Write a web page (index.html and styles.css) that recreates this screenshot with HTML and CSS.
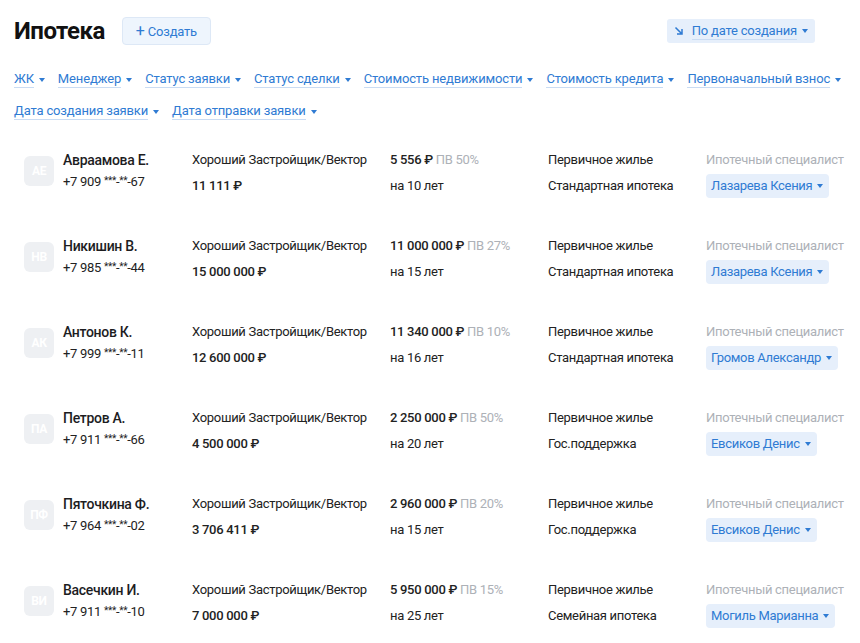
FILE: index.html
```html
<!DOCTYPE html>
<html lang="ru">
<head>
  <meta charset="UTF-8">
  <title>Ипотека</title>
  <link rel="stylesheet" href="styles.css">
</head>
<body>
  <div class="header">
    <h1>Ипотека</h1>
    <button class="create-btn"><span class="plus">+</span> Создать</button>
    <button class="sort-btn">
      <svg width="10" height="10" viewBox="0 0 10 10"><path d="M1.5 1.5 L8 8 M8 3 V8 H3" fill="none" stroke="currentColor" stroke-width="1.5"/></svg>
      <span class="link">По дате создания</span><span class="caret"></span>
    </button>
  </div>

  <div class="filters">
    <span class="filter"><span class="link">ЖК</span><span class="caret"></span></span>
    <span class="filter"><span class="link">Менеджер</span><span class="caret"></span></span>
    <span class="filter"><span class="link">Статус заявки</span><span class="caret"></span></span>
    <span class="filter"><span class="link">Статус сделки</span><span class="caret"></span></span>
    <span class="filter"><span class="link">Стоимость недвижимости</span><span class="caret"></span></span>
    <span class="filter"><span class="link">Стоимость кредита</span><span class="caret"></span></span>
    <span class="filter"><span class="link">Первоначальный взнос</span><span class="caret"></span></span>
    <span class="filter"><span class="link">Дата создания заявки</span><span class="caret"></span></span>
    <span class="filter"><span class="link">Дата отправки заявки</span><span class="caret"></span></span>
  </div>

  <div class="list">
    <!-- 1 -->
    <div class="row">
      <div class="avatar">АЕ</div>
      <div class="person">
        <div class="name">Авраамова Е.</div>
        <div class="phone">+7 909 <span class="stars">***</span>-<span class="stars">**</span>-67</div>
      </div>
      <div class="cell">
        <div>Хороший Застройщик/Вектор</div>
        <div class="second strong">11 111 ₽</div>
      </div>
      <div class="cell">
        <div><span class="strong">5 556 ₽</span> <span class="muted">ПВ 50%</span></div>
        <div class="second">на 10 лет</div>
      </div>
      <div class="cell">
        <div>Первичное жилье</div>
        <div class="second">Стандартная ипотека</div>
      </div>
      <div class="cell">
        <div class="muted">Ипотечный специалист</div>
        <span class="chip">Лазарева Ксения<span class="caret"></span></span>
      </div>
    </div>
    <!-- 2 -->
    <div class="row">
      <div class="avatar">НВ</div>
      <div class="person">
        <div class="name">Никишин В.</div>
        <div class="phone">+7 985 <span class="stars">***</span>-<span class="stars">**</span>-44</div>
      </div>
      <div class="cell">
        <div>Хороший Застройщик/Вектор</div>
        <div class="second strong">15 000 000 ₽</div>
      </div>
      <div class="cell">
        <div><span class="strong">11 000 000 ₽</span> <span class="muted">ПВ 27%</span></div>
        <div class="second">на 15 лет</div>
      </div>
      <div class="cell">
        <div>Первичное жилье</div>
        <div class="second">Стандартная ипотека</div>
      </div>
      <div class="cell">
        <div class="muted">Ипотечный специалист</div>
        <span class="chip">Лазарева Ксения<span class="caret"></span></span>
      </div>
    </div>
    <!-- 3 -->
    <div class="row">
      <div class="avatar">АК</div>
      <div class="person">
        <div class="name">Антонов К.</div>
        <div class="phone">+7 999 <span class="stars">***</span>-<span class="stars">**</span>-11</div>
      </div>
      <div class="cell">
        <div>Хороший Застройщик/Вектор</div>
        <div class="second strong">12 600 000 ₽</div>
      </div>
      <div class="cell">
        <div><span class="strong">11 340 000 ₽</span> <span class="muted">ПВ 10%</span></div>
        <div class="second">на 16 лет</div>
      </div>
      <div class="cell">
        <div>Первичное жилье</div>
        <div class="second">Стандартная ипотека</div>
      </div>
      <div class="cell">
        <div class="muted">Ипотечный специалист</div>
        <span class="chip">Громов Александр<span class="caret"></span></span>
      </div>
    </div>
    <!-- 4 -->
    <div class="row">
      <div class="avatar">ПА</div>
      <div class="person">
        <div class="name">Петров А.</div>
        <div class="phone">+7 911 <span class="stars">***</span>-<span class="stars">**</span>-66</div>
      </div>
      <div class="cell">
        <div>Хороший Застройщик/Вектор</div>
        <div class="second strong">4 500 000 ₽</div>
      </div>
      <div class="cell">
        <div><span class="strong">2 250 000 ₽</span> <span class="muted">ПВ 50%</span></div>
        <div class="second">на 20 лет</div>
      </div>
      <div class="cell">
        <div>Первичное жилье</div>
        <div class="second">Гос.поддержка</div>
      </div>
      <div class="cell">
        <div class="muted">Ипотечный специалист</div>
        <span class="chip">Евсиков Денис<span class="caret"></span></span>
      </div>
    </div>
    <!-- 5 -->
    <div class="row">
      <div class="avatar">ПФ</div>
      <div class="person">
        <div class="name">Пяточкина Ф.</div>
        <div class="phone">+7 964 <span class="stars">***</span>-<span class="stars">**</span>-02</div>
      </div>
      <div class="cell">
        <div>Хороший Застройщик/Вектор</div>
        <div class="second strong">3 706 411 ₽</div>
      </div>
      <div class="cell">
        <div><span class="strong">2 960 000 ₽</span> <span class="muted">ПВ 20%</span></div>
        <div class="second">на 15 лет</div>
      </div>
      <div class="cell">
        <div>Первичное жилье</div>
        <div class="second">Гос.поддержка</div>
      </div>
      <div class="cell">
        <div class="muted">Ипотечный специалист</div>
        <span class="chip">Евсиков Денис<span class="caret"></span></span>
      </div>
    </div>
    <!-- 6 -->
    <div class="row">
      <div class="avatar">ВИ</div>
      <div class="person">
        <div class="name">Васечкин И.</div>
        <div class="phone">+7 911 <span class="stars">***</span>-<span class="stars">**</span>-10</div>
      </div>
      <div class="cell">
        <div>Хороший Застройщик/Вектор</div>
        <div class="second strong">7 000 000 ₽</div>
      </div>
      <div class="cell">
        <div><span class="strong">5 950 000 ₽</span> <span class="muted">ПВ 15%</span></div>
        <div class="second">на 25 лет</div>
      </div>
      <div class="cell">
        <div>Первичное жилье</div>
        <div class="second">Семейная ипотека</div>
      </div>
      <div class="cell">
        <div class="muted">Ипотечный специалист</div>
        <span class="chip">Могиль Марианна<span class="caret"></span></span>
      </div>
    </div>
  </div>
</body>
</html>
```

FILE: styles.css
```css
body {
  margin: 0;
  padding: 17px 0 0 14px;
  font-family: Roboto, "Noto Sans", sans-serif;
  font-size: 13px;
  letter-spacing: -0.3px;
  color: #222;
  background: #fff;
  overflow: hidden;
}
h1 {
  margin: 0 17px 0 0;
  font-size: 24px;
  font-weight: 700;
  letter-spacing: -0.5px;
  color: #111;
}
button {
  font-family: inherit;
  font-size: 13px;
  letter-spacing: -0.2px;
  cursor: pointer;
}

.header {
  display: flex;
  align-items: center;
  height: 28px;
  padding-right: 45px;
}
.create-btn {
  height: 28px;
  padding: 0 13px;
  border: 1px solid #dde8f6;
  border-radius: 4px;
  background: #eef5fd;
  color: #2f7bd3;
}
.create-btn .plus {
  font-size: 16px;
  line-height: 1;
}
.sort-btn {
  margin-left: auto;
  display: flex;
  align-items: center;
  gap: 8px;
  height: 24px;
  padding: 0 7px;
  border: 0;
  border-radius: 3px;
  background: #e6effb;
  color: #2f7bd3;
}

.link {
  border-bottom: 1px solid #cadcf3;
  padding-bottom: 1px;
}
.caret {
  display: inline-block;
  width: 0;
  height: 0;
  margin-left: 5px;
  border-left: 3px solid transparent;
  border-right: 3px solid transparent;
  border-top: 4px solid currentColor;
  vertical-align: middle;
}
.sort-btn .caret {
  margin-left: -3px;
}

.filters {
  display: flex;
  flex-wrap: wrap;
  column-gap: 13px;
  row-gap: 14px;
  margin-top: 25px;
  line-height: 18px;
  letter-spacing: -0.15px;
  color: #2f7bd3;
}

.list {
  margin-top: 32px;
  padding-left: 10px;
}
.row {
  display: grid;
  grid-template-columns: 39px 129px 198px 158px 158px auto;
  margin-bottom: 40px;
  line-height: 16px;
  white-space: nowrap;
}
.avatar {
  width: 30px;
  height: 30px;
  margin-top: 4px;
  border-radius: 6px;
  background: #eef0f3;
  color: #fff;
  font-size: 12px;
  font-weight: 700;
  line-height: 30px;
  text-align: center;
}
.name {
  font-size: 14px;
  font-weight: 500;
  color: #1d1d1f;
}
.phone {
  margin-top: 5px;
}
.stars {
  font-size: 10px;
  vertical-align: 2px;
}
.second {
  margin-top: 10px;
}
.strong {
  font-weight: 500;
}
.muted {
  color: #adb1b7;
}
.chip {
  display: inline-flex;
  align-items: center;
  height: 24px;
  margin-top: 6px;
  padding: 0 6px 0 5px;
  border-radius: 4px;
  background: #e6effb;
  color: #2f7bd3;
}
```
